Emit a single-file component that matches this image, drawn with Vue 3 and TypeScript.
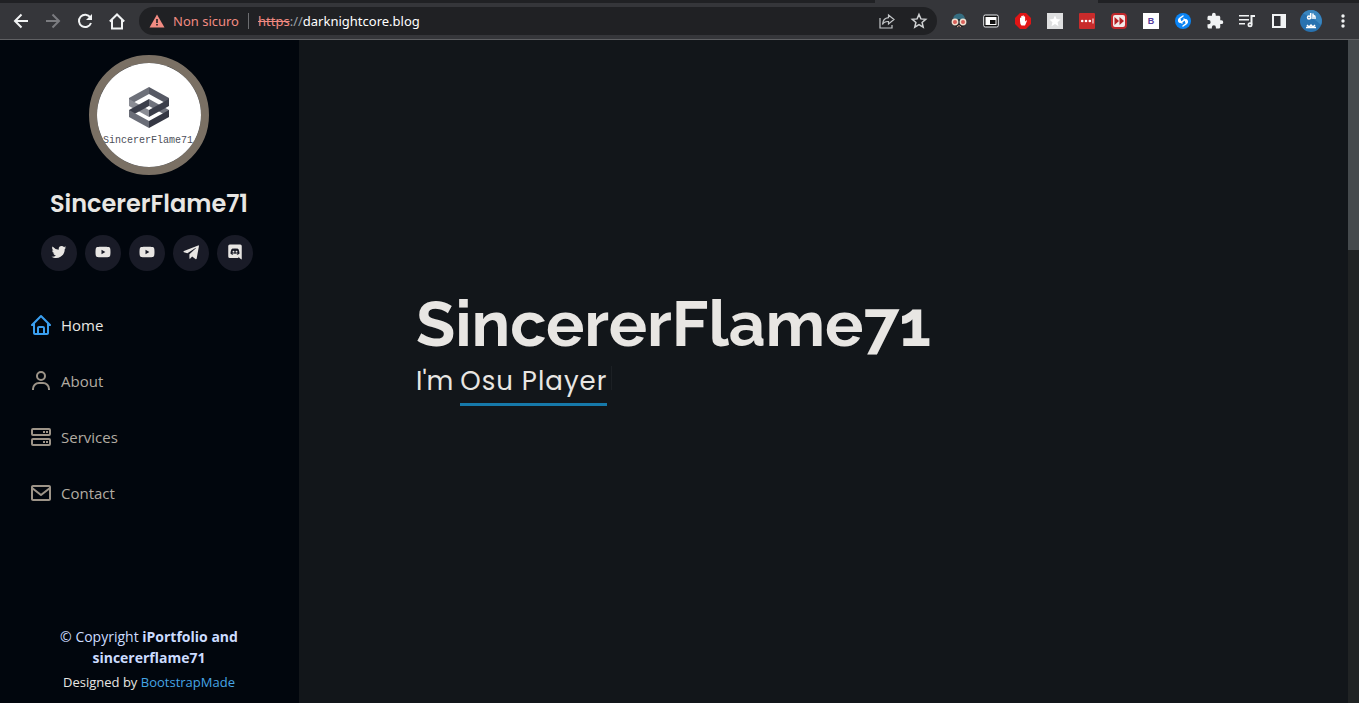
<script setup lang="ts">
interface NavItem {
  label: string
  href: string
  path: string
  active?: boolean
}

interface SocialLink {
  label: string
  path: string
}

const youtube =
  'M21.6 7.2a2.5 2.5 0 0 0-1.8-1.8C18.3 5 12 5 12 5s-6.3 0-7.8.4A2.5 2.5 0 0 0 2.4 7.2C2 8.7 2 12 2 12s0 3.3.4 4.8a2.5 2.5 0 0 0 1.8 1.8C5.7 19 12 19 12 19s6.3 0 7.8-.4a2.5 2.5 0 0 0 1.8-1.8C22 15.3 22 12 22 12s0-3.3-.4-4.8zM10 15V9l5.2 3z'

const socials: SocialLink[] = [
  {
    label: 'Twitter',
    path: 'M19.633 7.997c.013.175.013.349.013.523 0 5.325-4.053 11.461-11.46 11.461-2.282 0-4.402-.661-6.186-1.809.324.037.636.05.973.05a8.07 8.07 0 0 0 5.001-1.721 4.036 4.036 0 0 1-3.767-2.793c.249.037.499.062.761.062.361 0 .724-.05 1.061-.137a4.027 4.027 0 0 1-3.23-3.953v-.05c.537.299 1.16.486 1.82.511a4.022 4.022 0 0 1-1.796-3.354c0-.748.199-1.434.548-2.032a11.457 11.457 0 0 0 8.306 4.215c-.062-.3-.1-.611-.1-.923a4.026 4.026 0 0 1 4.028-4.028c1.16 0 2.207.486 2.943 1.272a7.957 7.957 0 0 0 2.556-.973 4.02 4.02 0 0 1-1.771 2.22 8.073 8.073 0 0 0 2.319-.624 8.645 8.645 0 0 1-2.019 2.083z',
  },
  { label: 'YouTube', path: youtube },
  { label: 'YouTube (second channel)', path: youtube },
  {
    label: 'Telegram',
    path: 'M21.5 3.2 2.6 10.8c-.8.3-.8 1.2 0 1.4l4.6 1.5L18 6.7c.5-.3.9 0 .5.4l-8.6 8v5.1c0 .7.7.9 1.1.4l2.5-2.5 4.4 3.2c.8.5 1.5.2 1.7-.8l2.9-16c.2-1.2-.3-1.7-1-1.3z',
  },
  {
    label: 'Discord',
    path: 'M18.9 2H5.1A2.1 2.1 0 0 0 3 4.1V18a2.1 2.1 0 0 0 2.1 2.1h11.7l-.6-1.9 1.3 1.2 1.3 1.2L21 22V4.1A2.1 2.1 0 0 0 18.9 2zm-4 13.5-.7-.9c1.3-.4 1.8-1.2 1.8-1.2-2.3 1.4-5.4 1.5-8 0 0 0 .5.8 1.8 1.2l-.7.9c-2.2-.1-3.1-1.5-3.1-1.5 0-3.2 1.4-5.8 1.4-5.8C8.8 7.1 10.2 7.2 10.2 7.2l.1.3c1.1-.2 2.3-.2 3.4 0l.1-.3s1.4-.1 2.8 1c0 0 1.4 2.6 1.4 5.8 0 0-.9 1.4-3.1 1.5zM10 10.3a1.2 1.2 0 1 0 0 2.5 1.2 1.2 0 1 0 0-2.5zm4 0a1.2 1.2 0 1 0 0 2.5 1.2 1.2 0 1 0 0-2.5z',
  },
]

const navItems: NavItem[] = [
  {
    label: 'Home',
    href: '#hero',
    active: true,
    path: 'M3 13h1v7c0 1.103.897 2 2 2h12c1.103 0 2-.897 2-2v-7h1a1 1 0 0 0 .707-1.707l-9-9a.999.999 0 0 0-1.414 0l-9 9A1 1 0 0 0 3 13zm7 7v-5h4v5h-4zm2-15.586 6 6V15l.001 5H16v-5c0-1.103-.897-2-2-2h-4c-1.103 0-2 .897-2 2v5H6v-9.586l6-6z',
  },
  {
    label: 'About',
    href: '#about',
    path: 'M12 2a5 5 0 1 0 5 5 5 5 0 0 0-5-5zm0 8a3 3 0 1 1 3-3 3 3 0 0 1-3 3zm9 11v-1a7 7 0 0 0-7-7h-4a7 7 0 0 0-7 7v1h2v-1a5 5 0 0 1 5-5h4a5 5 0 0 1 5 5v1z',
  },
  {
    label: 'Services',
    href: '#services',
    path: 'M20 3H4a2 2 0 0 0-2 2v4a2 2 0 0 0 2 2h16a2 2 0 0 0 2-2V5a2 2 0 0 0-2-2zM4 9V5h16v4zm16 4H4a2 2 0 0 0-2 2v4a2 2 0 0 0 2 2h16a2 2 0 0 0 2-2v-4a2 2 0 0 0-2-2zM4 19v-4h16v4zM17 6h2v2h-2zm-3 0h2v2h-2zm3 10h2v2h-2zm-3 0h2v2h-2z',
  },
  {
    label: 'Contact',
    href: '#contact',
    path: 'M20 4H4c-1.103 0-2 .897-2 2v12c0 1.103.897 2 2 2h16c1.103 0 2-.897 2-2V6c0-1.103-.897-2-2-2zm0 2v.511l-8 6.223-8-6.222V6h16zM4 18V9.044l7.386 5.745a.994.994 0 0 0 1.228 0L20 9.044 20.002 18H4z',
  },
]
</script>

<template>
  <div class="browser">
    <div class="tabstrip"><span class="tab-edge"></span></div>
    <header class="toolbar">
      <div class="nav-buttons">
        <button class="tool" aria-label="Back">
          <svg width="20" height="20" viewBox="0 0 20 20" fill="none" stroke="#f1f3f4" stroke-width="2"><path d="M17 10H4M10.500 3.500 4 10l6.500 6.500" /></svg>
        </button>
        <button class="tool" aria-label="Forward">
          <svg width="20" height="20" viewBox="0 0 20 20" fill="none" stroke="#7b7c80" stroke-width="2"><path d="M3 10h13M9.500 3.500 16 10l-6.500 6.500" /></svg>
        </button>
        <button class="tool" aria-label="Reload">
          <svg width="20" height="20" viewBox="0 0 20 20"><path d="M15.300 6.400A6.200 6.200 0 1 0 16 12" fill="none" stroke="#f1f3f4" stroke-width="2" /><path d="M17 3v6h-6z" fill="#f1f3f4" /></svg>
        </button>
        <button class="tool" aria-label="Home page">
          <svg width="20" height="20" viewBox="0 0 20 20" fill="none" stroke="#f1f3f4" stroke-width="2"><path d="M2.800 10.500 10 3.500l7.200 7M5 9v8.500h10V9" /></svg>
        </button>
      </div>

      <div class="omnibox">
        <button class="security">
          <svg width="16" height="16" viewBox="0 0 16 16"><path d="M8 1.500 15.500 14.500H.5z" fill="#f28b82" /><path d="M7.200 6h1.600v4H7.200zm0 5h1.600v1.600H7.200z" fill="#202124" /></svg>
          <span>Non sicuro</span>
        </button>
        <span class="divider"></span>
        <span class="url"><s>https</s><i>://</i>darknightcore.blog</span>
        <button class="tool share" aria-label="Share">
          <svg width="18" height="18" viewBox="0 0 18 18" fill="none" stroke="#c4c7c9" stroke-width="1.200"><path d="M2 6v10h12v-3M10.500 3l5.500 4.500-5.500 4.500V9.500C7.500 9.300 5.500 10.500 4.500 12.500 4.800 8.500 7 6 10.500 5.700z" /></svg>
        </button>
        <button class="tool" aria-label="Bookmark">
          <svg width="18" height="18" viewBox="0 0 18 18" fill="none" stroke="#d0d2d4" stroke-width="1.500"><path d="m9 2.500 1.900 4.400 4.800.4-3.600 3.100 1.100 4.700L9 12.600l-4.200 2.500 1.100-4.700-3.600-3.100 4.800-.4z" /></svg>
        </button>
      </div>

      <div class="extensions">
        <button class="tool" aria-label="Privacy mask">
          <svg width="16" height="16" viewBox="0 0 16 16"><path d="M2 7Q2 .5 8.500.5 14 1 14 7z" fill="#356d80" /><path d="M1 6h14v2H1z" fill="#1e3038" /><path d="M2 11h12l-2 3H5z" fill="#222" /><g fill="#d9605a" stroke="#f0dfcf" stroke-width="1.400"><circle cx="4" cy="9" r="2.700" /><circle cx="12" cy="9" r="2.700" /></g><path d="M6 14 8 12.500 10 14" stroke="#d9a69a" fill="none" /></svg>
        </button>
        <button class="tool" aria-label="Picture in picture">
          <svg width="16" height="16" viewBox="0 0 16 16"><rect x=".7" y="2" width="14.600" height="12" rx="1.500" fill="#111" stroke="#e8eaed" stroke-width="1" /><path d="M2.500 4h11v8h-11z" fill="#fff" /><path d="M7 7h5.500v4H7z" fill="#111" /></svg>
        </button>
        <button class="tool" aria-label="Ad blocker">
          <svg width="16" height="16" viewBox="0 0 16 16"><path d="M5 0h6l5 5v6l-5 5H5l-5-5V5z" fill="#e01515" /><path d="M5 8V5q.7-1 1.200 0V3.300q.7-1 1.300 0V2.800q.7-1 1.300 0v1q.7-1 1.300 0v4.700l1.300-1.200q1 .2.300 1.200L10 12.500H6.500Q5 11 5 8z" fill="#fff" /></svg>
        </button>
        <button class="tool" aria-label="Favourites">
          <svg width="16" height="16" viewBox="0 0 16 16"><path d="M0 0h16v16H0z" fill="#dedfe0" /><path d="m8 2.500 1.600 3.600 4 .4-3 2.700.9 4L8 11.100l-3.500 2.100.9-4-3-2.700 4-.4z" fill="#fff" /></svg>
        </button>
        <button class="tool" aria-label="Password manager">
          <svg width="16" height="16" viewBox="0 0 16 16"><rect width="16" height="16" rx="1" fill="#c92b2b" /><g fill="#fff"><circle cx="3.200" cy="8" r="1.300" /><circle cx="7" cy="8" r="1.300" /><circle cx="10.800" cy="8" r="1.300" /><path d="M13.500 5.500h1v5h-1z" /></g></svg>
        </button>
        <button class="tool" aria-label="Skip forward">
          <svg width="16" height="16" viewBox="0 0 16 16"><rect x="1" y="1" width="14" height="14" rx="3" fill="#f3e9e8" stroke="#c0272b" stroke-width="2" /><path d="m3.500 4 4.500 4-4.500 4zm5 0L13 8l-4.500 4z" fill="#b52024" /></svg>
        </button>
        <button class="tool" aria-label="Bootstrap tools"><span class="b-badge">B</span></button>
        <button class="tool" aria-label="Shazam">
          <svg width="16" height="16" viewBox="0 0 16 16"><circle cx="8" cy="8" r="8" fill="#0a84f5" /><path d="M6.500 9.500C3 9.500 3 6.500 5 5.200L8 3M9.500 6.500c3.500 0 3.500 3 1.500 4.300L8 13M6.800 8.800 9.200 7.200M5 6.500q0 2 2 3.500M11 9.500q0-2-2-3.500" fill="none" stroke="#fff" stroke-width="1.500" stroke-linecap="round" /></svg>
        </button>
        <button class="tool" aria-label="Extensions">
          <svg width="18" height="18" viewBox="0 0 24 24" fill="#f1f3f4"><path d="M20.500 11H19V7c0-1.100-.9-2-2-2h-4V3.500a2.500 2.500 0 0 0-5 0V5H4c-1.100 0-2 .9-2 2v3.800h1.500a2.700 2.700 0 0 1 0 5.400H2V20c0 1.100.9 2 2 2h3.800v-1.500a2.700 2.700 0 0 1 5.400 0V22H17c1.100 0 2-.9 2-2v-4h1.500a2.500 2.500 0 0 0 0-5z" /></svg>
        </button>
        <button class="tool" aria-label="Media controls">
          <svg width="18" height="16" viewBox="0 0 18 16" fill="#f1f3f4"><path d="M1 2h10v1.600H1zm0 4h10v1.600H1zm0 4h6v1.600H1zM12.500 2H17v2h-2.500v7.500h-2z" /><circle cx="12" cy="11.800" r="2.500" /><circle cx="12" cy="11.800" r=".8" fill="#35363a" /></svg>
        </button>
        <button class="tool" aria-label="Side panel">
          <svg width="16" height="16" viewBox="0 0 16 16"><path d="M1 1h14v14H1z" fill="#f1f3f4" /><path d="M3 3h6.500v10H3z" fill="#303136" /></svg>
        </button>
        <button class="tool" aria-label="Profile">
          <svg width="22" height="22" viewBox="0 0 22 22"><circle cx="11" cy="11" r="11" fill="#2872b0" /><path d="M11 0a11 11 0 0 1 10 15Q14 8 3 3.500A11 11 0 0 1 11 0z" fill="#3a86bf" /><g fill="none" stroke="#fff" stroke-width="1.500"><circle cx="9" cy="7.500" r="1.500" /><path d="M10.700 3v6M13 3.500V9M13 6.500q2-1.500 2 .5v2M6 17.500h10M7 15l2 2 2-2 2 2 2-2" /></g></svg>
        </button>
        <button class="tool" aria-label="Menu">
          <svg width="16" height="16" viewBox="0 0 16 16" fill="#f1f3f4"><circle cx="8" cy="3" r="1.700" /><circle cx="8" cy="8" r="1.700" /><circle cx="8" cy="13" r="1.700" /></svg>
        </button>
      </div>
    </header>

    <div class="page">
      <aside class="sidebar">
        <div class="profile">
          <svg class="portrait" viewBox="0 0 104 104" role="img" aria-label="SincererFlame71 logo">
            <rect width="104" height="104" fill="#fff" />
            <!-- Upper ring -->
            <path d="M32 35 52 24v7L32 42z" fill="#6d7079" />
            <path d="m52 24 20 11v7L52 31z" fill="#565964" />
            <path d="m32 36 20 11v7L32 43z" fill="#8a8c94" />
            <!-- Lower ring, woven through the upper one -->
            <path d="m52 36 20 11v7L52 43z" fill="#70737d" />
            <path d="M72 36 52 47v7l20-11z" fill="#3b3e4a" />
            <path d="M32 47 52 36v7L32 54z" fill="#3b3e4a" />
            <path d="m32 47 20 11v7L32 54z" fill="#6a6d77" />
            <path d="M72 47 52 58v7l20-11z" fill="#343743" />
            <text x="51" y="80" text-anchor="middle">SincererFlame71</text>
          </svg>
          <h1><a href="#hero">SincererFlame71</a></h1>
          <div class="socials">
            <a v-for="social in socials" :key="social.label" href="#" :aria-label="social.label">
              <svg width="18" height="18" viewBox="0 0 24 24" fill="currentColor" fill-rule="evenodd"><path :d="social.path" /></svg>
            </a>
          </div>
        </div>

        <nav>
          <a v-for="item in navItems" :key="item.label" :href="item.href" :class="{ active: item.active }">
            <svg width="24" height="24" viewBox="0 0 24 24" fill="currentColor"><path :d="item.path" /></svg>
            <span>{{ item.label }}</span>
          </a>
        </nav>

        <footer>
          <p class="copyright">© Copyright <strong>iPortfolio and</strong> <strong>sincererflame71</strong></p>
          <p class="credits">Designed by <a href="#">BootstrapMade</a></p>
        </footer>
      </aside>

      <main id="hero" class="hero">
        <h2>SincererFlame71</h2>
        <p>I'm <span class="typed">Osu Player</span><span class="cursor"></span></p>
      </main>

      <div class="scrollbar"><div class="thumb"></div></div>
    </div>
  </div>
</template>

<style>
body {
  margin: 0;
  background: #12161a;
}
</style>

<style scoped>
* {
  box-sizing: border-box;
}
.browser {
  display: flex;
  flex-direction: column;
  height: 100vh;
  font-family: "Open Sans", "Noto Sans", sans-serif;
  color: #e8e6e3;
}
a {
  text-decoration: none;
  color: inherit;
}
button {
  border: 0;
  padding: 0;
  background: none;
  color: inherit;
  font: inherit;
}
svg {
  display: block;
}
.tabstrip {
  display: flex;
  flex: none;
  height: 3px;
  padding-left: 875px;
  background: #202124;
}
.tab-edge {
  width: 223px;
  background: #35363a;
}
.toolbar {
  display: flex;
  align-items: center;
  flex: none;
  height: 37px;
  background: #35363a;
  border-bottom: 1px solid #5f6063;
}
.nav-buttons,
.extensions {
  display: flex;
}
.nav-buttons {
  padding: 0 6px 0 5px;
}
.extensions {
  padding-left: 6px;
}
.tool {
  display: flex;
  flex: none;
  align-items: center;
  justify-content: center;
  width: 32px;
  height: 28px;
}
.omnibox {
  display: flex;
  flex: 1;
  min-width: 0;
  align-items: center;
  height: 28px;
  padding: 0 2px 0 10px;
  border-radius: 14px;
  background: #202124;
  font-family: "Noto Sans", "Open Sans", sans-serif;
  font-size: 13px;
  white-space: nowrap;
}
.security {
  display: flex;
  align-items: center;
  gap: 8px;
  color: #f28b82;
}
.divider {
  width: 1px;
  height: 16px;
  margin: 0 9px;
  background: #6c6d70;
}
.url {
  color: #fff;
}
.url s {
  color: #f28b82;
}
.url i {
  font-style: normal;
  color: #9aa0a6;
}
.share {
  margin-left: auto;
}
.b-badge {
  width: 16px;
  height: 16px;
  background: #fff;
  color: #563d9c;
  font: bold 9px/16px "Liberation Sans", sans-serif;
}
.page {
  display: flex;
  flex: 1;
  min-height: 0;
}
.sidebar {
  display: flex;
  flex-direction: column;
  flex: none;
  width: 299px;
  padding: 15px 16px 11px 15px;
  background: #01060d;
}
.portrait {
  width: 120px;
  height: 120px;
  margin: 0 auto;
  border: 8px solid #7a7064;
  border-radius: 50%;
}
.portrait text {
  font: 10px "Liberation Mono", monospace;
  fill: #4c4e58;
}
.profile h1 {
  margin: 13px 0 0;
  font: 600 24px/32px Poppins, Inter, sans-serif;
  text-align: center;
}
.socials {
  display: flex;
  justify-content: center;
  gap: 8px;
  padding: 15px 4px 0 0;
}
.socials a {
  display: flex;
  align-items: center;
  justify-content: center;
  width: 36px;
  height: 36px;
  padding-bottom: 2px;
  border-radius: 50%;
  background: #191b27;
}
nav {
  display: flex;
  flex-direction: column;
  gap: 8px;
  padding-top: 30px;
}
nav a {
  display: flex;
  align-items: center;
  gap: 8px;
  height: 48px;
  padding-left: 14px;
  font-size: 15px;
  color: #b2aca2;
}
nav svg {
  color: #9d9488;
}
nav a.active {
  color: #e8e6e3;
}
nav a.active svg {
  color: #3a9ff0;
}
footer {
  margin-top: auto;
  padding: 0 30px;
  font-size: 14px;
  line-height: 21px;
  text-align: center;
}
footer p {
  margin: 0;
}
.copyright {
  color: #ccdcff;
}
.credits {
  padding-top: 4px;
  font-size: 13px;
  line-height: 20px;
}
.credits a {
  color: #45a5e6;
}
.hero {
  display: flex;
  flex: 1;
  min-width: 0;
  flex-direction: column;
  justify-content: center;
  padding: 0 0 50px 117px;
  background: #12161a;
}
.hero h2 {
  margin: 0;
  font: 700 64px/72px Raleway, "Open Sans", sans-serif;
}
.hero p {
  margin: 0;
  font: 400 26px/42px Poppins, Inter, sans-serif;
}
.typed {
  display: inline-block;
  padding-bottom: 1px;
  border-bottom: 3px solid #1679aa;
  letter-spacing: 1px;
}
.cursor {
  display: inline-block;
  width: 1px;
  height: 24px;
  margin-left: 4px;
  background: #1c2024;
}
.scrollbar {
  flex: none;
  width: 11px;
  background: #202324;
}
.thumb {
  height: 31.7%;
  background: #454a4d;
}
</style>
